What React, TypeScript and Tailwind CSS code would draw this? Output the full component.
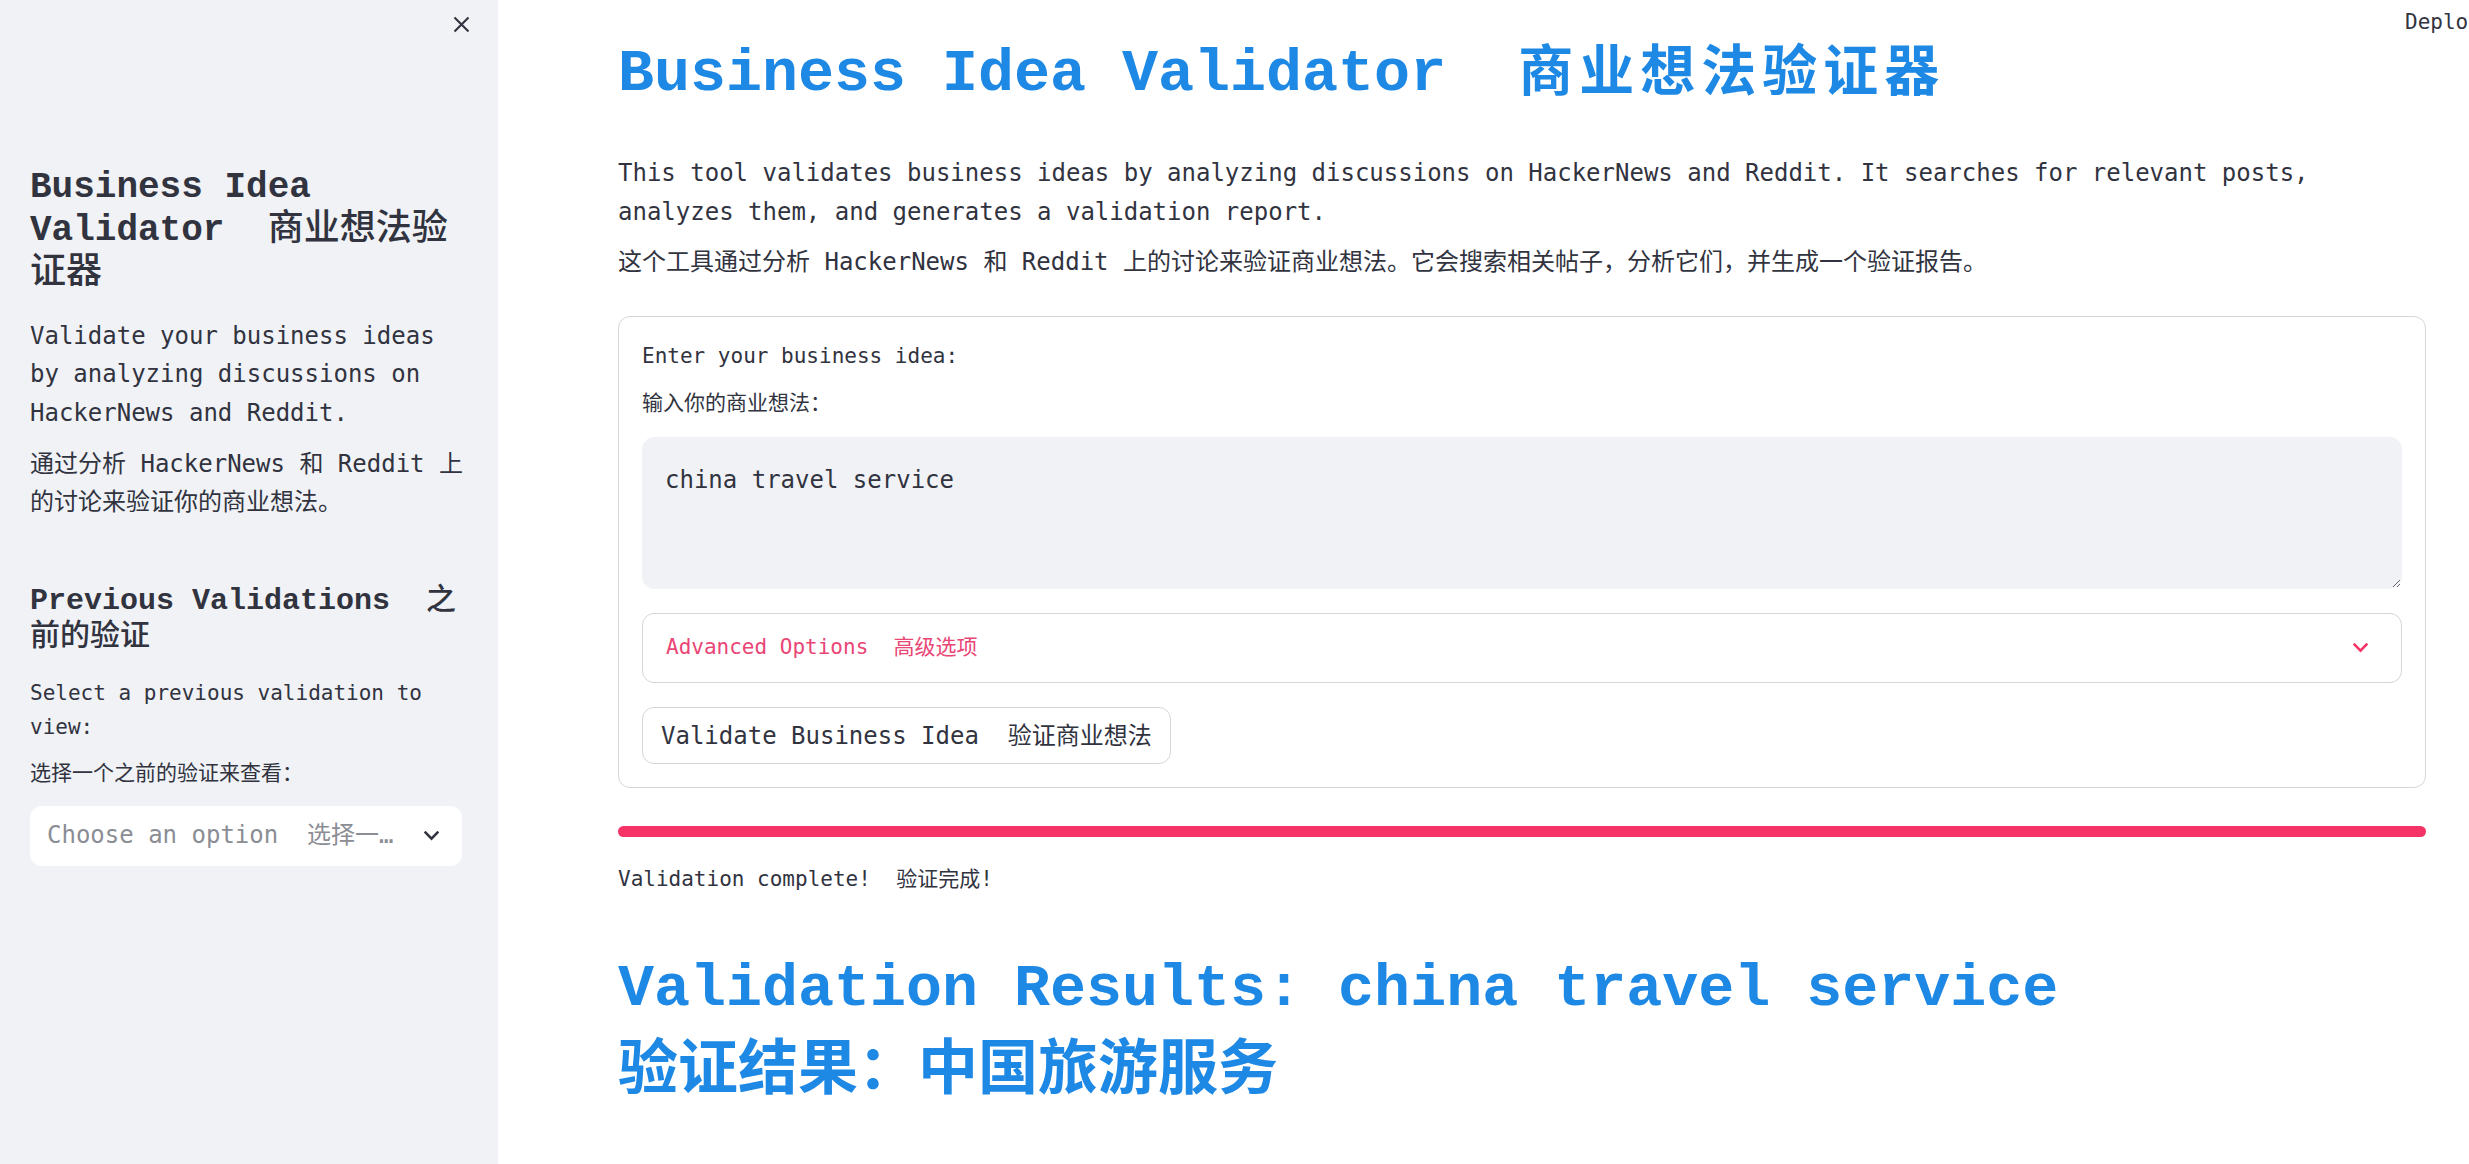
import React from "react";

const SP = "\u00a0 ";

function Chevron({ color, w = 15, h = 10, sw = 2.6 }: { color: string; w?: number; h?: number; sw?: number }) {
  return (
    <svg width={w} height={h} viewBox="0 0 15 10" fill="none">
      <path d="M1.6 1.6L7.5 7.6L13.4 1.6" stroke={color} strokeWidth={sw} strokeLinecap="square" strokeLinejoin="miter" />
    </svg>
  );
}

export default function App() {
  return (
    <div className="relative flex h-screen w-full overflow-hidden bg-white font-['DejaVu_Sans_Mono','Noto_Sans_CJK_SC',monospace] text-[#31333f]">
      {/* Sidebar */}
      <aside className="w-[498px] shrink-0 bg-[#f0f2f6] pl-[30px] pr-[34px]">
        <div className="-mr-[6px] flex justify-end pt-[16px]">
          <svg width="17" height="17" viewBox="0 0 17 17" fill="none">
            <path d="M1.5 1.5L15.5 15.5M15.5 1.5L1.5 15.5" stroke="#31333f" strokeWidth="2.1" />
          </svg>
        </div>
        <h2 className="mt-[132.5px] font-['Liberation_Mono','Noto_Sans_CJK_SC',monospace] text-[36px] font-bold leading-[43px]">
          Business Idea Validator{SP}
          <span className="font-medium leading-none">商业想法验证器</span>
        </h2>
        <p className="mt-[22.5px] text-[24px] leading-[38.4px]">
          Validate your business ideas by analyzing discussions on HackerNews and Reddit.
        </p>
        <p className="mt-[12.8px] text-[24px] leading-[38.4px]">
          通过分析 HackerNews 和 Reddit 上的讨论来验证你的商业想法。
        </p>
        <h3 className="mt-[60.8px] font-['Liberation_Mono','Noto_Sans_CJK_SC',monospace] text-[30px] font-bold leading-[36px]">
          Previous Validations{SP}
          <span className="font-medium leading-none">之前的验证</span>
        </h3>
        <p className="mt-[22.6px] text-[21px] leading-[33.6px]">Select a previous validation to view:</p>
        <p className="mt-[12.8px] text-[21px] leading-[33.6px]">选择一个之前的验证来查看：</p>
        <div className="mt-[14.8px] flex h-[60px] w-[432px] items-center rounded-[12px] bg-white pl-[17px]">
          <div className="w-[356px] truncate text-[24px] leading-[38.4px] text-[#8b8d94]">
            Choose an option{SP}选择一个选项
          </div>
          <div className="flex flex-1 justify-center pr-[3px]">
            <Chevron color="#31333f" />
          </div>
        </div>
      </aside>

      {/* Main */}
      <main className="min-w-0 flex-1 pl-[120px] pr-[43px] pt-[38px]">
        <h1 className="whitespace-nowrap font-['Liberation_Mono','Noto_Sans_CJK_SC',monospace] text-[60px] font-bold leading-[72px] text-[#1e88e5]">
          Business Idea Validator{SP}
          <span className="text-[55px] font-bold leading-none tracking-[6px]">商业想法验证器</span>
        </h1>
        <p className="mt-[44.4px] text-[24px] leading-[38.4px]">
          This tool validates business ideas by analyzing discussions on HackerNews and Reddit. It searches for
          relevant posts, analyzes them, and generates a validation report.
        </p>
        <p className="mt-[12px] text-[24px] leading-[38.4px]">
          这个工具通过分析 HackerNews 和 Reddit 上的讨论来验证商业想法。它会搜索相关帖子，分析它们，并生成一个验证报告。
        </p>

        <div className="mt-[34px] rounded-[12px] border border-[#d6d6d9] p-[23px]">
          <div className="text-[21px] leading-[33.6px]">Enter your business idea:</div>
          <div className="mt-[14px] text-[21px] leading-[33.6px]">输入你的商业想法：</div>
          <textarea
            className="mt-[15.8px] block h-[152px] w-full resize-y rounded-[12px] border border-[#f0f2f6] bg-[#f0f2f6] px-[22px] pt-[23px] text-[24px] leading-[38.4px] text-[#31333f] outline-none"
            defaultValue="china travel service"
          />
          <div className="mt-[24px] flex h-[70px] items-center justify-between rounded-[12px] border border-[#d6d6d9] pl-[23px] pr-[33px]">
            <span className="pt-[1px] text-[21px] leading-[33.6px] text-[#e94676]">
              Advanced Options{SP}高级选项
            </span>
            <Chevron color="#f63366" />
          </div>
          <div className="mt-[24px] flex">
            <button className="flex h-[57px] items-center rounded-[12px] border border-[#d6d6d9] bg-white px-[18px] pt-[3px] text-[24px] leading-[38.4px]">
              Validate Business Idea{SP}验证商业想法
            </button>
          </div>
        </div>

        <div className="mt-[38px] h-[11px] rounded-full bg-[#f63366]" />
        <p className="mt-[26.6px] text-[21px] leading-[33.6px]">Validation complete!{SP}验证完成!</p>

        <h2 className="mt-[49.8px] font-['Liberation_Mono','Noto_Sans_CJK_SC',monospace] text-[60px] font-bold leading-[84px] text-[#1e88e5]">
          Validation Results: china travel service
          <br />
          <span className="font-bold leading-none">验证结果：中国旅游服务</span>
        </h2>
      </main>

      <div className="absolute left-[2405px] top-[6px] whitespace-nowrap text-[21px] leading-[33.6px] text-[#31333f]">
        Deploy
      </div>
    </div>
  );
}
